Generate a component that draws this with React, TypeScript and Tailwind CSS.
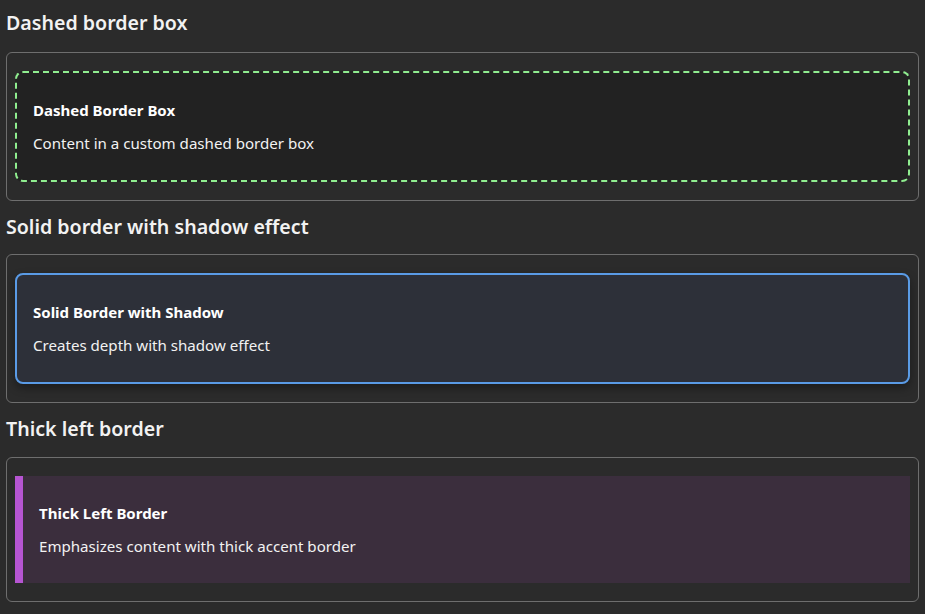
export default function App() {
  return (
    <div className="min-h-screen bg-[#2b2b2b] px-[6px] pt-[9px] pb-4 text-[#f2f2f2] font-['Segoe_UI','Noto_Sans',sans-serif]">
      {/* Dashed */}
      <h2 className="text-[19.6px] leading-[28px] font-semibold mb-[15px]">Dashed border box</h2>
      <div className="rounded-md border border-[#6e6e6e] px-[8px] py-[18px]">
        <div className="rounded-lg border-2 border-dashed border-[#90ee90] bg-[#222222] px-[16px] pt-[26px] pb-[26px]">
          <h3 className="text-[15px] leading-[22px] font-bold text-white">Dashed Border Box</h3>
          <p className="mt-[11px] text-[15.1px] leading-[22px]">Content in a custom dashed border box</p>
        </div>
      </div>

      {/* Solid with shadow */}
      <h2 className="mt-[12px] mb-[13px] text-[19.6px] leading-[28px] font-semibold">Solid border with shadow effect</h2>
      <div className="rounded-md border border-[#6e6e6e] px-[8px] py-[18px]">
        <div className="rounded-lg border-2 border-[#5a9be6] bg-[#2d3039] px-[16px] pt-[26px] pb-[26px] shadow-[0_4px_8px_rgba(0,0,0,0.35)]">
          <h3 className="text-[15px] leading-[22px] font-bold text-white">Solid Border with Shadow</h3>
          <p className="mt-[11px] text-[15.1px] leading-[22px]">Creates depth with shadow effect</p>
        </div>
      </div>

      {/* Thick left */}
      <h2 className="mt-[12px] mb-[14px] text-[19.6px] leading-[28px] font-semibold">Thick left border</h2>
      <div className="rounded-md border border-[#6e6e6e] px-[8px] py-[18px]">
        <div className="border-l-8 border-[#b655d2] bg-[#3b2e3d] px-[16px] pt-[26px] pb-[26px]">
          <h3 className="text-[15px] leading-[22px] font-bold text-white">Thick Left Border</h3>
          <p className="mt-[11px] text-[15.1px] leading-[22px]">Emphasizes content with thick accent border</p>
        </div>
      </div>
    </div>
  );
}
